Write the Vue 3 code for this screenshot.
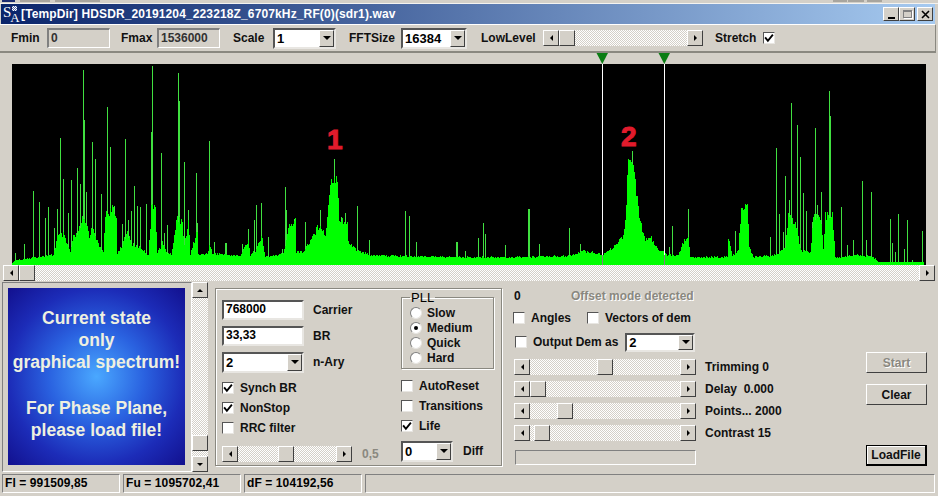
<template>
  <div class="window">
    <div class="topstrip">
      <i class="frag navy"></i><i class="frag f1"></i><i class="frag f2"></i>
      <i class="frag f3"></i><i class="frag f4"></i><i class="frag f5"></i>
    </div>
    <div class="titlebar">
      <div class="appicon">
        <span class="s">S</span>
        <span class="stack"><i class="pattern"></i><span class="a">A</span></span>
      </div>
      <div class="title">[TempDir] HDSDR_20191204_223218Z_6707kHz_RF(0)(sdr1).wav</div>
      <div class="winbtns">
        <button class="winbtn"><i class="g-min"></i></button>
        <button class="winbtn"><i class="g-max"></i></button>
        <button class="winbtn close">
          <svg width="9" height="9" viewBox="0 0 9 9"><path d="M1 1l7 7M8 1l-7 7" stroke="#000" stroke-width="1.6" /></svg>
        </button>
      </div>
    </div>

    <div class="toolbar">
      <label class="lb fmin">Fmin</label>
      <div class="readout w63">0</div>
      <label class="lb fmax">Fmax</label>
      <div class="readout w63">1536000</div>
      <label class="lb scale">Scale</label>
      <div class="combo w63">
        <span class="val">1</span><span class="drop"><i class="arr-d"></i></span>
      </div>
      <label class="lb fft">FFTSize</label>
      <div class="combo w66">
        <span class="val">16384</span><span class="drop"><i class="arr-d"></i></span>
      </div>
      <label class="lb low">LowLevel</label>
      <div class="hscroll lowbar">
        <span class="sbtn"><i class="arr-l"></i></span>
        <span class="track"><span class="thumb"></span></span>
        <span class="sbtn"><i class="arr-r"></i></span>
      </div>
      <label class="lb stretch">Stretch</label>
      <span class="check on"><svg viewBox="0 0 9 9"><path d="M1 4l2.5 3L8 1.5" fill="none" stroke="#000" stroke-width="1.7" /></svg></span>
    </div>

    <svg class="spectrum" viewBox="0 53 938 212" width="938" height="212" shape-rendering="crispEdges">
      <rect x="12" y="64" width="914" height="201" fill="#000" />
      <path :d="spikePath" stroke="#40e040" stroke-width="1" fill="none" />
      <path :d="bulkPath" stroke="#00ff00" stroke-width="1" fill="none" />
      <g v-for="m in markers" :key="m">
        <path :d="`M${m - 5.5} 53h11.5l-5.7 11z`" fill="#0a7d14" shape-rendering="auto" />
        <rect :x="m" y="64" width="1" height="191" fill="#fff" />
        <rect :x="m" y="255" width="1" height="10" fill="#808080" />
      </g>
      <text x="327" y="149" class="mark">1</text>
      <text x="621" y="146" class="mark">2</text>
    </svg>

    <div class="hscroll mainbar">
      <span class="sbtn"><i class="arr-l"></i></span>
      <span class="track"><span class="thumb"></span></span>
      <span class="sbtn"><i class="arr-r"></i></span>
    </div>

    <div class="body">
      <div class="leftcol">
        <div class="picframe">
          <div class="picture">
            <p>Current state</p>
            <p>only</p>
            <p>graphical spectrum!</p>
            <p class="blank"></p>
            <p>For Phase Plane,</p>
            <p>please load file!</p>
          </div>
        </div>
        <div class="vscroll">
          <span class="sbtn"><i class="arr-u"></i></span>
          <span class="vtrack"><span class="vthumb"></span></span>
          <span class="sbtn"><i class="arr-dn"></i></span>
        </div>
      </div>

      <div class="group">
        <div class="gcol">
          <div class="frow">
            <div class="edit">768000</div><label class="lb">Carrier</label>
          </div>
          <div class="frow">
            <div class="edit">33,33</div><label class="lb">BR</label>
          </div>
          <div class="frow">
            <div class="combo w82"><span class="val">2</span><span class="drop"><i class="arr-d"></i></span></div>
            <label class="lb">n-Ary</label>
          </div>
          <div class="checks">
            <div v-for="c in leftChecks" :key="c.label" class="chk">
              <span class="check" :class="{ on: c.on }"><svg v-if="c.on" viewBox="0 0 9 9"><path d="M1 4l2.5 3L8 1.5" fill="none" stroke="#000" stroke-width="1.7" /></svg></span>
              <label class="lb">{{ c.label }}</label>
            </div>
          </div>
          <div class="sliderrow">
            <div class="hscroll w130">
              <span class="sbtn"><i class="arr-l"></i></span>
              <span class="track"><span class="thumb" :style="{ marginLeft: '40px' }"></span></span>
              <span class="sbtn"><i class="arr-r"></i></span>
            </div>
            <label class="lb dim">0,5</label>
          </div>
        </div>
        <div class="gcol right">
          <fieldset class="pll">
            <legend>PLL</legend>
            <div v-for="r in radios" :key="r" class="radio">
              <span class="dot" :class="{ on: r === 'Medium' }"></span>
              <label class="lb">{{ r }}</label>
            </div>
          </fieldset>
          <div class="checks rchecks">
            <div v-for="c in rightChecks" :key="c.label" class="chk">
              <span class="check" :class="{ on: c.on }"><svg v-if="c.on" viewBox="0 0 9 9"><path d="M1 4l2.5 3L8 1.5" fill="none" stroke="#000" stroke-width="1.7" /></svg></span>
              <label class="lb">{{ c.label }}</label>
            </div>
          </div>
          <div class="frow diff">
            <div class="combo w52"><span class="val">0</span><span class="drop"><i class="arr-d"></i></span></div>
            <label class="lb">Diff</label>
          </div>
        </div>
      </div>

      <div class="rightcol">
        <div class="inforow">
          <label class="lb zero">0</label>
          <label class="lb offset">Offset mode detected</label>
        </div>
        <div class="chkrow angles-row">
          <span class="check"></span><label class="lb angles">Angles</label>
          <span class="check"></span><label class="lb">Vectors of dem</label>
        </div>
        <div class="chkrow output">
          <span class="check"></span><label class="lb">Output Dem as</label>
          <div class="combo w70"><span class="val">2</span><span class="drop"><i class="arr-d"></i></span></div>
        </div>
        <div class="sliders">
          <div v-for="s in sliders" :key="s.label" class="sliderline">
            <div class="hscroll w182">
              <span class="sbtn"><i class="arr-l"></i></span>
              <span class="track"><span class="thumb" :style="{ marginLeft: s.pos + 'px' }"></span></span>
              <span class="sbtn"><i class="arr-r"></i></span>
            </div>
            <label class="lb">{{ s.label }}</label>
          </div>
        </div>
        <div class="progress"></div>
      </div>

      <div class="btncol">
        <button class="btn disabled">Start</button>
        <button class="btn clear">Clear</button>
        <button class="btn def">LoadFile</button>
      </div>
    </div>

    <div class="status">
      <div class="pane">Fl = 991509,85</div>
      <div class="pane">Fu = 1095702,41</div>
      <div class="pane">dF = 104192,56</div>
      <div class="pane last"></div>
    </div>
  </div>
</template>

<script setup>
const markers = [602, 664];
const radios = ['Slow', 'Medium', 'Quick', 'Hard'];

const leftChecks = [
  { label: 'Synch BR', on: true },
  { label: 'NonStop', on: true },
  { label: 'RRC filter', on: false },
];
const rightChecks = [
  { label: 'AutoReset', on: false },
  { label: 'Transitions', on: false },
  { label: 'Life', on: true },
];
const sliders = [
  { label: 'Trimming 0', pos: 67 },
  { label: 'Delay  0.000', pos: 0 },
  { label: 'Points... 2000', pos: 27 },
  { label: 'Contrast 15', pos: 4 },
];

// x, top y of the narrow carriers, read off the reference
const spikes = [
  [15, 253], [24, 244], [33, 191], [39, 202], [45, 218], [48, 207], [54, 228], [57, 209], [60, 138], [63, 179],
  [68, 213], [71, 180], [77, 168], [80, 184], [83, 70], [84, 120], [86, 192], [92, 142], [95, 159], [101, 194],
  [107, 107], [110, 147], [114, 206], [122, 224], [125, 139], [128, 220], [131, 211], [134, 186], [137, 206],
  [140, 207], [146, 204], [152, 66], [151, 132], [161, 153], [164, 233], [167, 225], [178, 73], [179, 101],
  [184, 162], [188, 210], [196, 173], [197, 223], [209, 141], [214, 242], [225, 243], [226, 243], [242, 244], [248, 229],
  [254, 220], [256, 205], [261, 203], [268, 237], [282, 249], [285, 187], [286, 210], [294, 219], [305, 222],
  [320, 210], [334, 159], [341, 217], [345, 213], [357, 206], [369, 240], [405, 211], [409, 216], [416, 242],
  [456, 242], [457, 242], [465, 251], [478, 238], [483, 223], [485, 234], [505, 245], [528, 209], [529, 209], [539, 244],
  [569, 228], [580, 244], [632, 151], [669, 247], [672, 226], [688, 209], [735, 231], [770, 237], [776, 148],
  [779, 214], [783, 232], [785, 176], [789, 200], [791, 103], [797, 125], [797, 189], [800, 157], [803, 193],
  [806, 211], [812, 222], [815, 128], [817, 205], [821, 192], [829, 91], [830, 116], [841, 207], [847, 245],
  [853, 240], [862, 181], [866, 240], [871, 192], [890, 219], [892, 243], [895, 252], [898, 214], [904, 249],
  [907, 220], [912, 260], [922, 231],
];

// outline of the filled part of the spectrum
const outline = [
  [12, 263], [15, 260], [28, 259], [30, 258], [53, 255], [57, 237], [63, 235], [67, 245], [70, 252], [73, 238], [78, 233],
  [82, 220], [87, 227], [89, 235], [93, 227], [98, 245], [103, 253], [105, 213], [112, 210], [116, 218], [117, 253],
  [122, 245], [127, 233], [132, 245], [140, 247], [148, 255], [151, 210], [155, 203], [157, 253], [162, 243], [167, 253],
  [171, 254], [177, 217], [182, 220], [184, 247], [188, 220], [190, 255], [195, 237], [197, 230], [198, 255], [207, 253],
  [209, 245], [212, 253], [240, 256], [248, 240], [250, 255], [255, 250], [262, 237], [265, 257], [283, 254], [289, 225], [295, 220], [296, 252],
  [303, 252], [310, 240], [320, 223], [325, 237], [330, 181], [337, 177], [339, 217], [347, 225], [348, 242], [358, 251],
  [370, 255], [390, 256], [470, 257], [523, 257], [570, 256], [583, 251], [593, 252], [602, 255], [613, 247], [623, 238],
  [625, 223], [628, 156], [633, 160], [636, 193], [640, 223], [645, 240], [650, 237], [657, 248], [664, 253], [667, 255],
  [678, 255], [683, 242], [688, 238], [690, 257], [727, 257], [728, 237], [732, 256], [738, 250], [741, 207], [747, 205],
  [749, 247], [753, 257], [777, 255], [785, 248], [788, 218], [795, 220], [800, 250], [810, 252], [813, 218], [820, 215],
  [823, 250], [825, 217], [832, 215], [835, 258], [857, 255], [873, 257], [878, 262], [923, 262],
];

function envelope(x) {
  for (let i = 1; i < outline.length; i++) {
    const [x0, y0] = outline[i - 1];
    const [x1, y1] = outline[i];
    if (x <= x1) return y0 + ((y1 - y0) * (x - x0)) / (x1 - x0 || 1);
  }
  return 264;
}

// small fixed jitter so the fill has a rough top edge
function jitter(x) {
  const s = Math.sin(x * 12.9898) * 43758.5453;
  return s - Math.floor(s) - 0.5;
}

const spikePath = spikes.map(([x, y]) => `M${x}.5 ${y}V265`).join('');

let bulk = '';
for (let x = 12; x < 924; x++) {
  const top = envelope(x);
  const rough = jitter(x) * Math.min(10, (265 - top) * 0.22);
  bulk += `M${x}.5 ${Math.min(264, Math.round(top + rough))}V265`;
}
const bulkPath = bulk;
</script>

<style>
html, body {
  margin: 0;
  background: #d4d0c8;
}
</style>

<style scoped>
.window {
  position: relative;
  width: 938px;
  height: 496px;
  overflow: hidden;
  background: #d4d0c8;
  font-family: "Liberation Sans", Arial, sans-serif;
  font-size: 12px;
  color: #000;
  display: flex;
  flex-direction: column;
}

.lb {
  font-weight: 700;
  font-size: 12px;
  white-space: pre;
  color: #111;
}

.topstrip {
  height: 4px;
  box-sizing: border-box;
  border-bottom: 1px solid #f4f3f0;
  display: flex;
  align-items: flex-start;
}

.frag {
  height: 2px;
  background: #a8a59e;
}

.navy { width: 13px; margin-left: 2px; background: #1c2c70; }
.f1 { width: 30px; margin-left: 5px; }
.f2 { width: 45px; margin-left: 5px; }
.f3 { width: 14px; margin-left: auto; }
.f4 { width: 16px; margin-left: 1px; }
.f5 { width: 15px; margin-left: 3px; margin-right: 56px; }

.titlebar {
  height: 20px;
  margin: 0 3px 0 1px;
  background: linear-gradient(90deg, #0a246a, #a6caf0);
  display: flex;
  align-items: center;
  color: #fff;
}

.appicon {
  width: 17px;
  height: 20px;
  margin-left: 2px;
  display: flex;
  font-family: "Liberation Serif", serif;
}

.s {
  font-size: 15px;
  line-height: 16px;
  height: 16px;
}

.stack {
  display: flex;
  flex-direction: column;
  margin-left: -1px;
}

.pattern {
  width: 5px;
  height: 5px;
  margin: 2px 0 0 2px;
  background: repeating-conic-gradient(#fff 0 25%, #5a6ea8 0 50%) 0 0 / 2px 2px;
}

.a {
  font-size: 13px;
  line-height: 13px;
}

.title {
  margin-left: 1px;
  font-weight: 700;
  font-size: 12px;
  letter-spacing: 0.13px;
  white-space: pre;
}

.winbtns {
  margin-left: auto;
  margin-right: 2px;
  display: flex;
}

.winbtn {
  width: 16px;
  height: 14px;
  padding: 0;
  background: #d4d0c8;
  border: 1px solid;
  border-color: #fff #404040 #404040 #fff;
  display: flex;
  align-items: center;
  justify-content: center;
}

.winbtn.close {
  margin-left: 2px;
}

.g-min {
  width: 7px;
  height: 2px;
  background: #000;
  margin-top: 7px;
}

.g-max {
  width: 9px;
  height: 8px;
  border: 1px solid #808080;
  border-top-width: 2px;
  box-shadow: 1px 1px 0 #fff;
  box-sizing: border-box;
}

.toolbar {
  height: 29px;
  box-sizing: border-box;
  margin-right: 2px;
  border-top: 1px solid #fff;
  border-bottom: 2px solid #8a8880;
  border-right: 1px solid #8a8880;
  display: flex;
  align-items: center;
  padding-left: 11px;
}

.readout {
  height: 20px;
  box-sizing: border-box;
  border: 2px solid;
  border-color: #808080 #fff #fff #808080;
  border-right-width: 1px;
  border-bottom-width: 1px;
  padding-left: 2px;
  font-size: 12px;
  font-weight: 700;
  color: #333;
  line-height: 16px;
}

.w63 { width: 63px; }
.w66 { width: 66px; }
.w82 { width: 82px; }
.w52 { width: 52px; }
.w70 { width: 70px; }
.w130 { width: 130px; }
.w182 { width: 182px; }

.fmin { width: 36px; }
.fmax { width: 36px; margin-left: 11px; }
.scale { width: 40px; margin-left: 13px; }
.fft { width: 52px; margin-left: 13px; }
.low { width: 62px; margin-left: 14px; }
.stretch { width: 48px; margin-left: 12px; }

.combo {
  height: 21px;
  box-sizing: border-box;
  background: #fff;
  border: 2px solid;
  border-color: #555 #e8e6e2 #e8e6e2 #555;
  display: flex;
  align-items: center;
}

.val {
  flex: 1;
  padding-left: 2px;
  font-size: 13px;
  font-weight: 700;
}

.drop {
  width: 15px;
  height: 100%;
  box-sizing: border-box;
  background: #d4d0c8;
  border: 1px solid;
  border-color: #fff #404040 #404040 #fff;
  display: flex;
  align-items: center;
  justify-content: center;
}

.arr-d {
  width: 0;
  height: 0;
  border: 4px solid transparent;
  border-top-color: #000;
  border-bottom-width: 0;
}

.arr-l, .arr-r {
  width: 0;
  height: 0;
  border: 3.5px solid transparent;
}

.arr-l {
  border-right-color: #000;
  border-left-width: 0;
}

.arr-r {
  border-left-color: #000;
  border-right-width: 0;
}

.arr-u, .arr-dn {
  width: 0;
  height: 0;
  border: 3.5px solid transparent;
}

.arr-u {
  border-bottom-color: #000;
  border-top-width: 0;
}

.arr-dn {
  border-top-color: #000;
  border-bottom-width: 0;
}

.hscroll {
  height: 16px;
  display: flex;
  flex-shrink: 0;
}

.sbtn {
  width: 16px;
  height: 16px;
  flex-shrink: 0;
  box-sizing: border-box;
  background: #d4d0c8;
  border: 1px solid;
  border-color: #fff #404040 #404040 #fff;
  display: flex;
  align-items: center;
  justify-content: center;
}

.track {
  flex: 1;
  display: flex;
  background: repeating-conic-gradient(#d4d0c8 0 25%, #fff 0 50%) 0 0 / 2px 2px;
}

.thumb {
  width: 16px;
  height: 16px;
  box-sizing: border-box;
  background: #d4d0c8;
  border: 1px solid;
  border-color: #fff #404040 #404040 #fff;
}

.lowbar {
  width: 160px;
}

.spectrum {
  display: block;
  flex-shrink: 0;
}

.mark {
  font-family: "Liberation Sans", Arial, sans-serif;
  font-weight: 700;
  font-size: 28px;
  fill: #e11b2c;
  stroke: #e11b2c;
  stroke-width: 1px;
  shape-rendering: auto;
}

.mainbar {
  margin-left: 3px;
  margin-right: 3px;
}

.body {
  height: 192px;
  box-sizing: border-box;
  padding-top: 1px;
  display: flex;
  flex-shrink: 0;
}

.leftcol {
  display: flex;
  margin-left: 2px;
  height: 190px;
}

.picframe {
  width: 190px;
  box-sizing: border-box;
  padding: 5px;
  border: 1px solid;
  border-color: #808080 #fff #fff #808080;
}

.picture {
  width: 177px;
  height: 177px;
  box-sizing: border-box;
  padding-top: 19px;
  text-align: center;
  background: radial-gradient(circle at 50% 50%, #4aa8ff 0, #2a62e0 38%, #1c2cb8 70%, #12108e 100%);
  color: #eef0e0;
  font-weight: 700;
  font-size: 17.5px;
  line-height: 22px;
}

.picture p {
  margin: 0;
  white-space: nowrap;
}

.picture .blank {
  height: 24px;
}

.vscroll {
  width: 16px;
  display: flex;
  flex-direction: column;
}

.vtrack {
  flex: 1;
  display: flex;
  flex-direction: column;
  justify-content: flex-end;
  padding-bottom: 5px;
  background: repeating-conic-gradient(#d4d0c8 0 25%, #fff 0 50%) 0 0 / 2px 2px;
}

.vthumb {
  height: 16px;
  box-sizing: border-box;
  background: #d4d0c8;
  border: 1px solid;
  border-color: #fff #404040 #404040 #fff;
}

.group {
  width: 287px;
  height: 178px;
  margin: 6px 0 0 7px;
  box-sizing: border-box;
  border: 1px solid #8a8880;
  box-shadow: 1px 1px 0 #fff, inset 1px 1px 0 #fff;
  padding: 8px 0 0 6px;
  display: flex;
}

.gcol {
  width: 178px;
  display: flex;
  flex-direction: column;
}

.gcol.right {
  width: 95px;
  margin-left: 1px;
}

.frow {
  display: flex;
  align-items: center;
  height: 26px;
}

.frow .lb {
  margin-left: 9px;
}

.diff .lb {
  margin-left: 10px;
}

.edit {
  width: 82px;
  height: 20px;
  box-sizing: border-box;
  background: #fff;
  border: 2px solid;
  border-color: #555 #e8e6e2 #e8e6e2 #555;
  padding-left: 2px;
  font-weight: 700;
  line-height: 15px;
}

.checks {
  margin-top: 5px;
  display: flex;
  flex-direction: column;
  gap: 4px;
}

.chk {
  height: 16px;
  display: flex;
  align-items: center;
}

.chk .lb {
  margin-left: 6px;
}

.check {
  width: 12px;
  height: 12px;
  flex-shrink: 0;
  box-sizing: border-box;
  background: #fff;
  border: 1px solid;
  border-color: #555 #e8e6e2 #e8e6e2 #555;
  display: block;
}

.check svg {
  display: block;
  width: 10px;
  height: 10px;
}

.sliderrow {
  margin-top: 10px;
  display: flex;
  align-items: center;
}

.dim {
  margin-left: 10px;
  color: #8a8880;
}

.pll {
  width: 93px;
  height: 77px;
  box-sizing: border-box;
  margin: -5px 0 0 0;
  padding: 2px 0 0 8px;
  border: 1px solid #8a8880;
  box-shadow: 1px 1px 0 #fff, inset 1px 1px 0 #fff;
  border-radius: 0;
}

.pll legend {
  padding: 0 1px;
  font-size: 13px;
  font-weight: 400;
  line-height: 11px;
  margin-left: 0;
}

.radio {
  height: 15px;
  display: flex;
  align-items: center;
}

.radio .lb {
  margin-left: 5px;
}

.dot {
  width: 12px;
  height: 12px;
  border-radius: 50%;
  box-sizing: border-box;
  background: #fff;
  border: 1px solid #808080;
  border-right-color: #e8e6e2;
  border-bottom-color: #e8e6e2;
  display: flex;
  align-items: center;
  justify-content: center;
}

.dot.on::after {
  content: "";
  width: 4px;
  height: 4px;
  border-radius: 50%;
  background: #000;
}

.rchecks {
  margin-top: 9px;
}

.diff {
  margin-top: 4px;
}

.rightcol {
  width: 352px;
  margin-left: 12px;
  display: flex;
  flex-direction: column;
  flex-shrink: 0;
  box-sizing: border-box;
}

.inforow {
  height: 16px;
  margin-top: 6px;
  display: flex;
  align-items: center;
}

.zero {
  width: 57px;
}

.offset {
  color: #8a8880;
  text-shadow: 1px 1px 0 #fff;
}

.chkrow {
  height: 16px;
  margin-top: 6px;
  display: flex;
  align-items: center;
}

.chkrow .lb {
  margin-left: 6px;
}

.angles-row {
  margin-left: -1px;
}

.angles {
  width: 56px;
}

.output {
  margin-top: 6px;
  padding-left: 1px;
  height: 20px;
}

.output .combo {
  margin-left: 7px;
  height: 19px;
}

.sliders {
  margin-top: 7px;
  display: flex;
  flex-direction: column;
  gap: 6px;
}

.sliderline {
  display: flex;
  align-items: center;
}

.sliderline .lb {
  margin-left: 9px;
}

.progress {
  width: 181px;
  height: 15px;
  margin: 9px 0 0 1px;
  box-sizing: border-box;
  border: 1px solid;
  border-color: #808080 #fff #fff #808080;
}

.btncol {
  width: 61px;
  display: flex;
  flex-direction: column;
  align-items: stretch;
}

.btn {
  height: 21px;
  padding: 0;
  font-family: inherit;
  font-size: 12px;
  font-weight: 700;
  color: #111;
  background: #d4d0c8;
  border: 1px solid;
  border-color: #fff #404040 #404040 #fff;
}

.btn.disabled {
  margin-top: 70px;
  color: #8a8880;
  text-shadow: 1px 1px 0 #fff;
}

.clear {
  margin-top: 11px;
}

.def {
  margin-top: auto;
  margin-bottom: 7px;
  border: solid #000;
  border-width: 1px 2px 2px 1px;
  box-shadow: inset 1px 1px 0 #fff;
}

.status {
  height: 19px;
  margin-top: 1px;
  display: flex;
  gap: 3px;
  padding-left: 2px;
  padding-right: 3px;
  flex-shrink: 0;
}

.pane {
  width: 118px;
  box-sizing: border-box;
  border: 1px solid;
  border-color: #808080 #fff #fff #808080;
  padding-left: 2px;
  font-weight: 700;
  letter-spacing: 0.1px;
  line-height: 17px;
}

.pane.last {
  flex: 1;
}
</style>
